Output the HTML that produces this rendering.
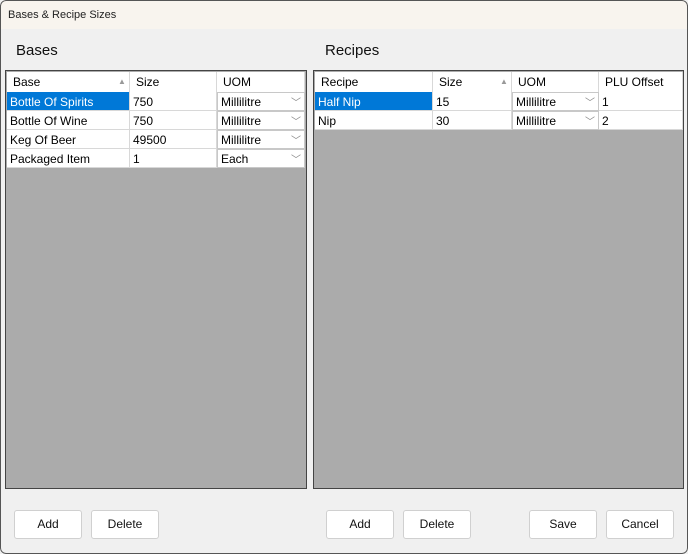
<!DOCTYPE html><html><head><style>
*{box-sizing:border-box;margin:0;padding:0}
body{width:688px;height:554px;overflow:hidden;font-family:"Liberation Sans",sans-serif;background:#f0f0f0;position:relative}
.win{position:absolute;left:0;top:0;width:688px;height:554px;border-radius:6px;overflow:hidden;background:#f0f0f0}
.frame{position:absolute;left:0;top:0;width:688px;height:554px;border:1px solid #555;border-radius:6px;pointer-events:none}
.title{position:absolute;left:0;top:0;width:688px;height:29px;background:#f8f4ee;font-size:11px;padding:9px 0 0 8px;color:#222}
.lbl{position:absolute;font-size:15px;color:#111}
.grid{position:absolute;background:#ababab;border:1px solid #444}
.c{position:absolute;background:#fff;font-size:12px;color:#000;padding:3px 0 0 3px;height:19px;white-space:nowrap;border-right:1px solid #d8d8d8;border-bottom:1px solid #d8d8d8}
.h{padding:3px 0 0 6px;height:21px}
.sel{background:#0078d7;color:#fff}
.dd{border:1px solid #c8c8c8;padding:2px 0 0 3px}
.ar{position:absolute;right:3px;top:1px;color:#888;font-size:10px}
.btn{position:absolute;width:68px;height:29px;background:#fff;border:1px solid #d0d0d0;border-radius:3px;font-size:12px;text-align:center;line-height:27px;color:#111}
.tri{position:absolute;color:#999;font-size:8px;top:5px}
</style></head><body><div class="win">
<div class="title">Bases &amp; Recipe Sizes</div>
<div class="lbl" style="left:16px;top:42px">Bases</div>
<div class="lbl" style="left:325px;top:42px">Recipes</div>
<div class="grid" style="left:5px;top:70px;width:302px;height:419px">
<div class="c h" style="left:1px;top:1px;width:123px">Base<span class="tri" style="left:111px">▲</span></div>
<div class="c h" style="left:124px;top:1px;width:87px">Size</div>
<div class="c h" style="left:211px;top:1px;width:88px">UOM</div>
<div class="c sel" style="left:1px;top:21px;width:123px">Bottle Of Spirits</div>
<div class="c" style="left:124px;top:21px;width:87px">750</div>
<div class="c dd" style="left:211px;top:21px;width:88px">Millilitre<span class="ar">﹀</span></div>
<div class="c" style="left:1px;top:40px;width:123px">Bottle Of Wine</div>
<div class="c" style="left:124px;top:40px;width:87px">750</div>
<div class="c dd" style="left:211px;top:40px;width:88px">Millilitre<span class="ar">﹀</span></div>
<div class="c" style="left:1px;top:59px;width:123px">Keg Of Beer</div>
<div class="c" style="left:124px;top:59px;width:87px">49500</div>
<div class="c dd" style="left:211px;top:59px;width:88px">Millilitre<span class="ar">﹀</span></div>
<div class="c" style="left:1px;top:78px;width:123px">Packaged Item</div>
<div class="c" style="left:124px;top:78px;width:87px">1</div>
<div class="c dd" style="left:211px;top:78px;width:88px">Each<span class="ar">﹀</span></div>
</div>
<div class="grid" style="left:313px;top:70px;width:371px;height:419px">
<div class="c h" style="left:1px;top:1px;width:118px">Recipe</div>
<div class="c h" style="left:119px;top:1px;width:79px">Size<span class="tri" style="left:67px">▲</span></div>
<div class="c h" style="left:198px;top:1px;width:87px">UOM</div>
<div class="c h" style="left:285px;top:1px;width:84px">PLU Offset</div>
<div class="c sel" style="left:1px;top:21px;width:118px">Half Nip</div>
<div class="c" style="left:119px;top:21px;width:79px">15</div>
<div class="c dd" style="left:198px;top:21px;width:87px">Millilitre<span class="ar">﹀</span></div>
<div class="c" style="left:285px;top:21px;width:84px">1</div>
<div class="c" style="left:1px;top:40px;width:118px">Nip</div>
<div class="c" style="left:119px;top:40px;width:79px">30</div>
<div class="c dd" style="left:198px;top:40px;width:87px">Millilitre<span class="ar">﹀</span></div>
<div class="c" style="left:285px;top:40px;width:84px">2</div>
</div>
<div class="btn" style="left:14px;top:510px">Add</div>
<div class="btn" style="left:91px;top:510px">Delete</div>
<div class="btn" style="left:326px;top:510px">Add</div>
<div class="btn" style="left:403px;top:510px">Delete</div>
<div class="btn" style="left:529px;top:510px">Save</div>
<div class="btn" style="left:606px;top:510px">Cancel</div>
<div class="frame"></div>
</div></body></html>
